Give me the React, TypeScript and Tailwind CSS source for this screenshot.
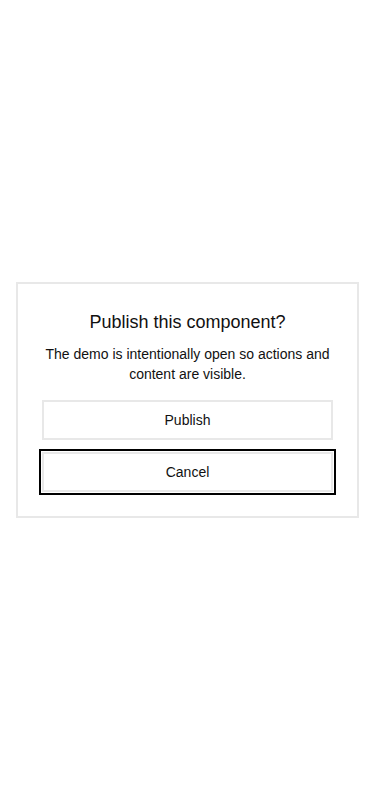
export default function App() {
  return (
    <div
      className="min-h-screen flex items-center justify-center bg-white px-4"
      style={{ fontFamily: '"Liberation Sans", Arial, sans-serif' }}
    >
      <div className="w-full border-2 border-[#e8e8e8] bg-white p-6 text-center">
        <h2 className="text-lg leading-7 text-[#111]">Publish this component?</h2>
        <p className="mt-2 text-sm leading-5 text-[#111]">
          The demo is intentionally open so actions and content are visible.
        </p>
        <div className="mt-4 flex flex-col gap-3">
          <button className="h-10 w-full border-2 border-[#e8e8e8] bg-white text-sm text-[#111]">
            Publish
          </button>
          <button className="h-10 w-full border-2 border-[#e8e8e8] bg-white text-sm text-[#111] outline-2 outline-solid outline-black outline-offset-1">
            Cancel
          </button>
        </div>
      </div>
    </div>
  );
}
